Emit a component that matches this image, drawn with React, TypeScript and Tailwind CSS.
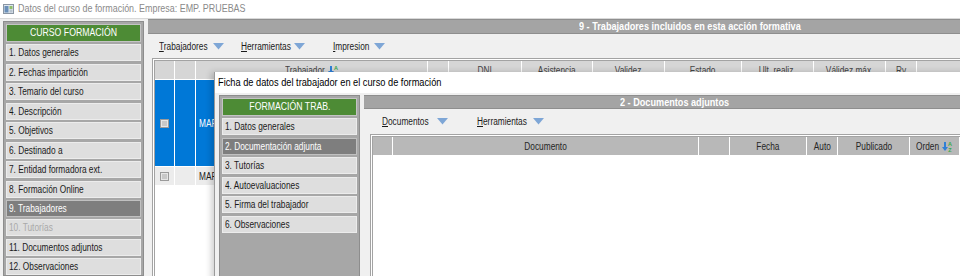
import React from "react";

const ui = { fontFamily: '"Liberation Sans", Arial, sans-serif' };

const cursoItems = [
  "1. Datos generales",
  "2. Fechas impartición",
  "3. Temario del curso",
  "4. Descripción",
  "5. Objetivos",
  "6. Destinado a",
  "7. Entidad formadora ext.",
  "8. Formación Online",
  "9. Trabajadores",
  "10. Tutorías",
  "11. Documentos adjuntos",
  "12. Observaciones",
];

const fichaItems = [
  "1. Datos generales",
  "2. Documentación adjunta",
  "3. Tutorías",
  "4. Autoevaluaciones",
  "5. Firma del trabajador",
  "6. Observaciones",
];

// narrow (Arial Narrow like) text
const Narrow = ({ children, center }: { children: React.ReactNode; center?: boolean }) => (
  <span
    className={
      "inline-block whitespace-nowrap scale-x-[0.83] " + (center ? "origin-center" : "origin-left")
    }
  >
    {children}
  </span>
);

const DropArrow = () => (
  <svg width="11" height="7" viewBox="0 0 11 7" className="shrink-0">
    <path d="M0 0 H11 L5.5 6.5 Z" fill="#7ea6d6" />
  </svg>
);

const SortIcon = () => (
  <svg width="11" height="11" viewBox="0 0 11 11" className="shrink-0">
    <path d="M2 1 H4 V6 H6 L3 10 L0 6 H2 Z" fill="#2f7fd6" />
    <text x="6" y="5" fontSize="5.5" fill="#3aa84a" fontFamily="Liberation Sans, sans-serif" fontWeight="bold">
      A
    </text>
    <text x="6.3" y="10.5" fontSize="5.5" fill="#3aa84a" fontFamily="Liberation Sans, sans-serif" fontWeight="bold">
      Z
    </text>
  </svg>
);

const Check = () => (
  <span className="inline-block w-[9px] h-[9px] border border-[#9a9a9a] bg-[#e6e6e6] p-[1px]">
    <span className="block w-full h-full bg-[#c8c8c8]" />
  </span>
);

const ToolItem = ({
  first,
  label,
  w,
  gap,
  ml,
}: {
  first: string;
  label: string;
  w: string;
  gap: string;
  ml: string;
}) => (
  <div className={"flex items-center text-[10px] text-[#1a1a1a] " + ml}>
    <span className={"block overflow-visible " + w + " " + gap}>
      <Narrow>
        <span className="underline">{first}</span>
        {label}
      </Narrow>
    </span>
    <DropArrow />
  </div>
);

const SidePanel = ({
  title,
  items,
  selected,
  disabled,
}: {
  title: string;
  items: string[];
  selected: number;
  disabled?: number;
}) => (
  <div className="w-[141px] h-full bg-[#a7a7a7] border border-[#8d8d8d] p-[2px] flex flex-col gap-[2.45px]">
    <div className="h-[18px] shrink-0 bg-[#4d8b35] border border-[#c4c4c4] flex items-center justify-center text-white text-[10.5px]">
      <Narrow center>{title}</Narrow>
    </div>
    {items.map((it, i) => (
      <div
        key={it}
        className={
          "h-[17px] shrink-0 border flex items-center pl-[2px] text-[10px] " +
          (i === selected
            ? "bg-[#7e7e7e] border-[#c0c0c0] text-white"
            : i === disabled
            ? "bg-[#dedede] border-[#ececec] text-[#a9a9a9]"
            : "bg-[#dedede] border-[#ececec] text-[#1a1a1a]")
        }
      >
        <Narrow>{it}</Narrow>
      </div>
    ))}
  </div>
);

const HeaderCell = ({ w, children, dark }: { w: string; children?: React.ReactNode; dark?: boolean }) => (
  <div
    className={
      w +
      " shrink-0 h-full flex items-center justify-center border-r border-white text-[10px] " +
      (dark ? "bg-[#b8b8b8] text-[#262626]" : "bg-[#d6d6d6] text-[#444]")
    }
  >
    {children}
  </div>
);

export default function App() {
  return (
    <div className="relative w-[960px] h-[276px] overflow-hidden bg-[#f0f0f0]" style={ui}>
      {/* main window title */}
      <div className="h-[19px] bg-white border-b border-[#d9d9d9] flex items-center pl-[3px]">
        <svg width="11" height="10" viewBox="0 0 11 10" className="mr-[4px] shrink-0">
          <rect x="0.5" y="0.5" width="10" height="9" fill="#dfe6ee" stroke="#8a96a3" />
          <rect x="1.5" y="2" width="4" height="6.5" fill="#6a8fb8" />
          <rect x="6.5" y="2" width="3" height="3" fill="#8fbf6a" />
          <rect x="6.5" y="5.5" width="3" height="3" fill="#b7c3cf" />
        </svg>
        <span className="inline-block whitespace-nowrap origin-left scale-x-[0.85] text-[10.5px] text-[#8a8a8a]">
          Datos del curso de formación. Empresa: EMP. PRUEBAS
        </span>
      </div>

      <div className="flex h-[257px]">
        {/* left navigation */}
        <div className="pl-[3px] pt-[2px] h-full">
          <SidePanel title="CURSO FORMACIÓN" items={cursoItems} selected={8} disabled={9} />
        </div>

        {/* right content */}
        <div className="flex-1 ml-[4px] flex flex-col min-w-0">
          <div className="h-[15px] shrink-0 bg-[#a4a4a4] border-y border-[#8e8e8e] flex items-center pl-[431px] text-white font-bold text-[11px]">
            <Narrow>9 - Trabajadores incluidos en esta acción formativa</Narrow>
          </div>
          <div className="h-[24px] shrink-0 flex items-center pl-[11px] pt-[1px]">
            <ToolItem first="T" label="rabajadores" w="w-[48px]" gap="mr-[6px]" ml="" />
            <ToolItem first="H" label="erramientas" w="w-[49px]" gap="mr-[4px]" ml="ml-[17px]" />
            <ToolItem first="I" label="mpresion" w="w-[37px]" gap="mr-[4px]" ml="ml-[28px]" />
          </div>
          <div className="flex-1 ml-[4px] border-l-[3px] border-t-[3px] border-double border-[#a3a3a3] bg-white">
            <div className="h-[18px] flex">
              <HeaderCell w="w-[20px]" />
              <HeaderCell w="w-[21px]" />
              <HeaderCell w="w-[232px]">
                <span className="w-[40px]">
                  <Narrow>Trabajador</Narrow>
                </span>
                <span className="ml-[3px]">
                  <SortIcon />
                </span>
              </HeaderCell>
              <HeaderCell w="w-[21px]" />
              <HeaderCell w="w-[73px]">
                <Narrow center>DNI</Narrow>
              </HeaderCell>
              <HeaderCell w="w-[71px]">
                <Narrow center>Asistencia</Narrow>
              </HeaderCell>
              <HeaderCell w="w-[72px]">
                <Narrow center>Validez</Narrow>
              </HeaderCell>
              <HeaderCell w="w-[77px]">
                <Narrow center>Estado</Narrow>
              </HeaderCell>
              <HeaderCell w="w-[72px]">
                <Narrow center>Ult. realiz.</Narrow>
              </HeaderCell>
              <HeaderCell w="w-[72px]">
                <Narrow center>Válidez máx.</Narrow>
              </HeaderCell>
              <HeaderCell w="w-[31px]">
                <Narrow center>Rv</Narrow>
              </HeaderCell>
              <HeaderCell w="w-[60px]" />
            </div>
            <div className="h-[87px] flex border-t border-white">
              <div className="w-[20px] bg-[#0078d7] border-r border-white flex items-center justify-center">
                <Check />
              </div>
              <div className="w-[21px] bg-[#0078d7] border-r border-white" />
              <div className="w-[232px] bg-[#0078d7] border-r border-white flex items-center pl-[3px] text-white text-[10px] overflow-hidden">
                <Narrow>MAR</Narrow>
              </div>
              <div className="flex-1 bg-[#0078d7]" />
            </div>
            <div className="h-[19px] flex border-t border-white">
              <div className="w-[20px] bg-[#ececec] border-r border-white flex items-center justify-center">
                <Check />
              </div>
              <div className="w-[21px] bg-[#ececec] border-r border-white" />
              <div className="w-[232px] bg-[#ececec] border-r border-white flex items-center pl-[3px] text-[#1a1a1a] text-[10px] overflow-hidden">
                <Narrow>MAR</Narrow>
              </div>
            </div>
          </div>
        </div>
      </div>

      {/* child window over the main one */}
      <div className="absolute left-[214px] top-[72px] w-[760px] h-[220px] bg-[#f0f0f0] border-l border-[#9a9a9a] shadow-[-3px_0_6px_rgba(0,0,0,0.18)] flex flex-col">
        <div className="h-[21px] bg-white flex items-center pl-[3px] text-black shrink-0">
          <span className="inline-block whitespace-nowrap origin-left scale-x-[0.88] text-[10.5px]">
            Ficha de datos del trabajador en el curso de formación
          </span>
        </div>
        <div className="flex flex-1 min-h-0 pt-[2px]">
          <div className="pl-[4px] h-full">
            <SidePanel title="FORMACIÓN TRAB." items={fichaItems} selected={1} />
          </div>
          <div className="flex-1 ml-[4px] flex flex-col min-w-0">
            <div className="h-[14px] shrink-0 bg-[#a4a4a4] border-y border-[#8e8e8e] flex items-center pl-[256px] text-white font-bold text-[11px]">
              <Narrow>2 - Documentos adjuntos</Narrow>
            </div>
            <div className="h-[25px] shrink-0 flex items-center pl-[18px]">
              <ToolItem first="D" label="ocumentos" w="w-[46px]" gap="mr-[9px]" ml="" />
              <ToolItem first="H" label="erramientas" w="w-[48px]" gap="mr-[8px]" ml="ml-[29px]" />
            </div>
            <div className="flex-1 ml-[6px] border-l-[3px] border-t-[3px] border-double border-[#a3a3a3] bg-white">
              <div className="h-[18px] flex">
                <HeaderCell dark w="w-[20px]" />
                <HeaderCell dark w="w-[306px]">
                  <Narrow center>Documento</Narrow>
                </HeaderCell>
                <HeaderCell dark w="w-[31px]" />
                <HeaderCell dark w="w-[77px]">
                  <Narrow center>Fecha</Narrow>
                </HeaderCell>
                <HeaderCell dark w="w-[31px]">
                  <Narrow center>Auto</Narrow>
                </HeaderCell>
                <HeaderCell dark w="w-[72px]">
                  <Narrow center>Publicado</Narrow>
                </HeaderCell>
                <HeaderCell dark w="w-[50px]">
                  <span className="w-[24px]">
                    <Narrow>Orden</Narrow>
                  </span>
                  <span className="ml-[2px]">
                    <SortIcon />
                  </span>
                </HeaderCell>
                <HeaderCell dark w="w-[40px]" />
              </div>
            </div>
          </div>
        </div>
      </div>
    </div>
  );
}
